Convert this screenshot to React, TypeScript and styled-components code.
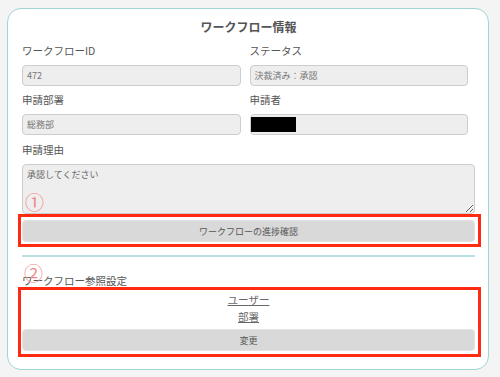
import React from 'react'
import styled, { createGlobalStyle } from 'styled-components'

const GlobalStyle = createGlobalStyle`
  body {
    margin: 0;
    background: #f4f4f4;
    font-family: "Noto Sans CJK JP", "Noto Sans", sans-serif;
  }
`

const Card = styled.div`
  position: relative;
  box-sizing: border-box;
  width: 482px;
  margin: 8px 0 0 7px;
  padding: 10px 13px 12px 14px;
  background: #fff;
  border: 1px solid #9ed5d6;
  border-radius: 14px;
`

const Title = styled.div`
  text-align: center;
  font-size: 12px;
  line-height: 16px;
  font-weight: bold;
  color: #555;
  margin-bottom: 9px;
`

const Grid = styled.div`
  display: grid;
  grid-template-columns: 1fr 1fr;
  column-gap: 9px;
  row-gap: 7px;
  padding-right: 7px;
`

const Field = styled.div<{ $top?: number }>`
  display: flex;
  flex-direction: column;
  margin-top: ${(p) => p.$top ?? 0}px;
`

const Label = styled.div`
  font-size: 10.5px;
  line-height: 14px;
  color: #555;
  margin-bottom: 7px;
`

const ReadField = styled.div`
  box-sizing: border-box;
  height: 21px;
  display: flex;
  align-items: center;
  padding: 0 4px;
  background: #eeeeee;
  border: 1px solid #cdcdcd;
  border-radius: 4px;
  font-size: 9px;
  color: #777;
`

const Redacted = styled.span`
  display: inline-block;
  width: 45px;
  height: 15px;
  margin-left: -4px;
  background: #000;
`

const Reason = styled.textarea`
  box-sizing: border-box;
  height: 50px;
  padding: 3px 4px;
  background: #eeeeee;
  border: 1px solid #cdcdcd;
  border-radius: 4px;
  font-family: inherit;
  font-size: 9px;
  line-height: 13px;
  color: #666;
  outline: none;
`

const Highlight = styled.div<{ $pad: string }>`
  display: flex;
  flex-direction: column;
  margin: 0 -6px 0 -4px;
  padding: ${(p) => p.$pad};
  border: 3px solid #ff2a12;
`

const GrayButton = styled.button`
  box-sizing: border-box;
  height: 22px;
  width: 100%;
  border: 1px solid #e2e2e2;
  border-radius: 4px;
  background: #d9d9d9;
  font-family: inherit;
  font-size: 9px;
  color: #555;
  cursor: pointer;
`

const Divider = styled.hr`
  margin: 8px 0 0;
  height: 2px;
  border: none;
  background: #b9e3e3;
`

const SectionLabel = styled(Label)`
  margin: 17px 0 -1px;
`

const Links = styled.div`
  display: flex;
  flex-direction: column;
  align-items: center;
  gap: 3px;
  margin-bottom: 5px;
`

const Link = styled.a`
  font-size: 10.5px;
  line-height: 14px;
  color: #666;
  text-decoration: underline;
  cursor: pointer;
`

const Marker = styled.span<{ $x: number; $y: number }>`
  position: absolute;
  left: ${(p) => p.$x}px;
  top: ${(p) => p.$y}px;
  font-size: 19px;
  line-height: 1;
  color: #f28585;
  pointer-events: none;
`

export default function App() {
  return (
    <>
      <GlobalStyle />
      <Card>
        <Title>ワークフロー情報</Title>
        <Grid>
          <Field>
            <Label>ワークフローID</Label>
            <ReadField>472</ReadField>
          </Field>
          <Field>
            <Label>ステータス</Label>
            <ReadField>決裁済み：承認</ReadField>
          </Field>
          <Field>
            <Label>申請部署</Label>
            <ReadField>総務部</ReadField>
          </Field>
          <Field>
            <Label>申請者</Label>
            <ReadField>
              <Redacted />
            </ReadField>
          </Field>
        </Grid>
        <Field $top={8}>
          <Label>申請理由</Label>
          <Reason readOnly value="承認してください" />
        </Field>
        <Highlight $pad="3px 3px 2px 1px">
          <GrayButton>ワークフローの進捗確認</GrayButton>
        </Highlight>
        <Divider />
        <SectionLabel>ワークフロー参照設定</SectionLabel>
        <Highlight $pad="3px 3px 3px 1px">
          <Links>
            <Link>ユーザー</Link>
            <Link>部署</Link>
          </Links>
          <GrayButton>変更</GrayButton>
        </Highlight>
        <Marker $x={17} $y={183}>①</Marker>
        <Marker $x={16} $y={254}>②</Marker>
      </Card>
    </>
  )
}
